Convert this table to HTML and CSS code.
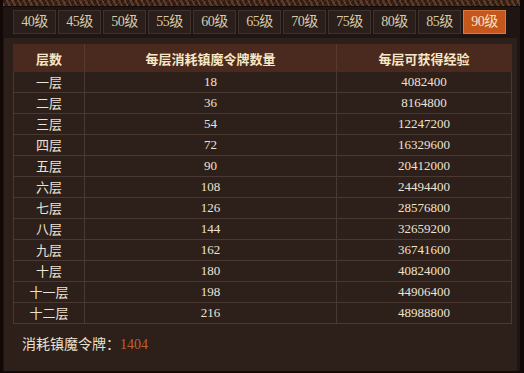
FILE: index.html
```html
<!DOCTYPE html>
<html lang="zh">
<head>
<meta charset="utf-8">
<title>镇魔塔</title>
<link rel="stylesheet" href="styles.css">
</head>
<body>
<div class="frame">
  <div class="strip"></div>
  <div class="tabs">
    <div class="tab">40级</div>
    <div class="tab">45级</div>
    <div class="tab">50级</div>
    <div class="tab">55级</div>
    <div class="tab">60级</div>
    <div class="tab">65级</div>
    <div class="tab">70级</div>
    <div class="tab">75级</div>
    <div class="tab">80级</div>
    <div class="tab">85级</div>
    <div class="tab active">90级</div>
  </div>
  <div class="panel">
    <table class="grid">
      <thead>
        <tr><th class="c1">层数</th><th class="c2">每层消耗镇魔令牌数量</th><th class="c3">每层可获得经验</th></tr>
      </thead>
      <tbody>
        <tr><td class="cn">一层</td><td>18</td><td>4082400</td></tr>
        <tr><td class="cn">二层</td><td>36</td><td>8164800</td></tr>
        <tr><td class="cn">三层</td><td>54</td><td>12247200</td></tr>
        <tr><td class="cn">四层</td><td>72</td><td>16329600</td></tr>
        <tr><td class="cn">五层</td><td>90</td><td>20412000</td></tr>
        <tr><td class="cn">六层</td><td>108</td><td>24494400</td></tr>
        <tr><td class="cn">七层</td><td>126</td><td>28576800</td></tr>
        <tr><td class="cn">八层</td><td>144</td><td>32659200</td></tr>
        <tr><td class="cn">九层</td><td>162</td><td>36741600</td></tr>
        <tr><td class="cn">十层</td><td>180</td><td>40824000</td></tr>
        <tr><td class="cn">十一层</td><td>198</td><td>44906400</td></tr>
        <tr><td class="cn">十二层</td><td>216</td><td>48988800</td></tr>
      </tbody>
    </table>
    <p class="total">消耗镇魔令牌：<span class="num">1404</span></p>
  </div>
</div>
</body>
</html>
```
FILE: styles.css
```css
html, body {
  margin: 0;
  padding: 0;
  background: #1d1310;
}
.frame {
  width: 524px;
  height: 373px;
  box-sizing: border-box;
  border-left: 3px solid #120907;
  border-right: 4px solid #0f0806;
  border-bottom: 2px solid #140b09;
  background: #1f1512;
  display: flex;
  flex-direction: column;
}
.strip {
  height: 6px;
  flex: none;
  background:
    repeating-linear-gradient(63deg, rgba(120,80,55,0.55) 0 2px, rgba(40,22,15,0.4) 2px 5px),
    repeating-linear-gradient(-48deg, rgba(90,58,40,0.6) 0 1px, rgba(30,16,10,0.5) 1px 4px),
    #4a2e20;
  border-bottom: 1px solid #140a07;
}
.tabs {
  display: flex;
  gap: 2px;
  padding: 3px 0 0 10px;
  flex: none;
}
.tab {
  width: 43px;
  height: 24px;
  box-sizing: border-box;
  border: 1px solid #3f322c;
  background: #2a1f1a;
  color: #d9caab;
  font-family: "Liberation Serif", "Noto Sans CJK SC", serif;
  font-size: 14px;
  line-height: 22px;
  text-align: center;
  letter-spacing: -0.5px;
}
.tab.active {
  background: #c5571c;
  border-color: #df7a3c;
  color: #f7e3c6;
}
.panel {
  margin: 4px 3px 0 1px;
  flex: 1;
  background: #2d1f1a;
  padding: 6px 6px 0 9px;
}
.grid {
  width: 499px;
  border-collapse: collapse;
  table-layout: fixed;
  font-family: "Liberation Serif", "Noto Sans CJK SC", serif;
  font-size: 13px;
  color: #ede3d2;
}
.grid th {
  height: 26px;
  padding: 0;
  background: #4a2a1e;
  color: #f7e8c5;
  font-family: "Noto Sans CJK SC", sans-serif;
  font-weight: bold;
  font-size: 13px;
  border: 1px solid #4a2a1e;
  border-right-color: #5a3a2c;
}
.grid th:last-child { border-right-color: #4a2a1e; }
.grid .c1 { width: 70px; }
.grid .c2 { width: 251px; }
.grid td {
  height: 20px;
  padding: 0;
  text-align: center;
  border: 1px solid #4a3930;
  line-height: 20px;
}
.grid td.cn {
  font-family: "Noto Sans CJK SC", sans-serif;
  font-size: 13px;
}
.total {
  margin: 9px 0 0 0;
  padding-left: 9px;
  font-family: "Noto Sans CJK SC", sans-serif;
  font-size: 14px;
  letter-spacing: 0;
  color: #e9e0cf;
  line-height: 20px;
}
.total .num {
  font-family: "Liberation Serif", serif;
  font-size: 14px;
  color: #c0622b;
}
```
